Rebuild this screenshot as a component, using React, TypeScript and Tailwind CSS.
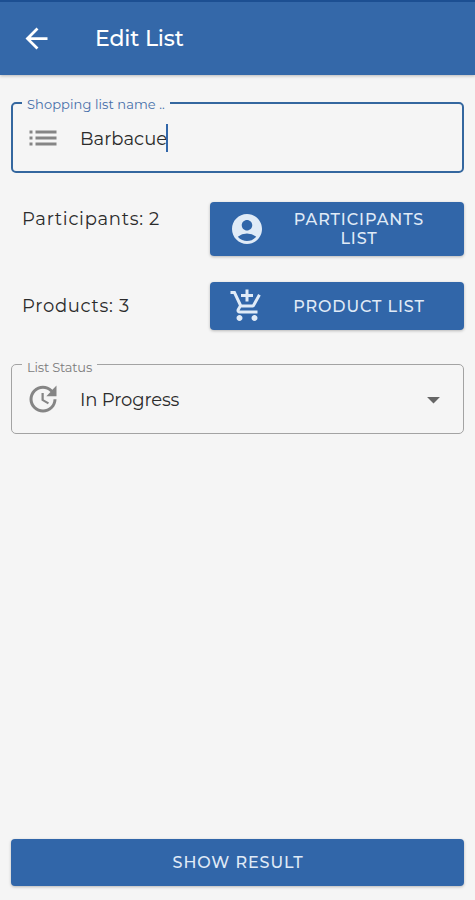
import React, { useState } from 'react';
import {
    MdAccountCircle,
    MdArrowBack,
    MdArrowDropDown,
    MdList,
    MdOutlineAddShoppingCart,
    MdUpdate,
} from 'react-icons/md';

const buttonClass =
    'flex items-center rounded-[4px] bg-[#3166a9] text-[16px] font-medium leading-[19px] text-[#e0ebf7] shadow-[0_1px_3px_rgba(0,0,0,0.25)]';

const App: React.FC = () => {
    const [name] = useState('Barbacue');
    const participants = 2;
    const products = 3;

    return (
        <div className="flex h-[900px] w-[475px] flex-col overflow-hidden bg-[#f5f5f5] font-['Montserrat','Inter',sans-serif] text-[#2b2b2b]">
            <header className="flex h-[75px] shrink-0 items-center border-t-2 border-[#1c4f92] bg-[#3468a9] pl-[20px] text-white shadow-[0_1px_3px_rgba(0,0,0,0.25)]">
                <MdArrowBack className="mb-px size-[33px]" />
                <h1 className="ml-[42px] text-[22px] font-medium leading-none tracking-[-0.15px]">Edit List</h1>
            </header>

            <main className="flex flex-1 flex-col px-[11px] pb-[14px] pt-[27px]">
                <fieldset className="h-[71px] w-[453px] rounded-[5px] border-[2.5px] border-[#34679f] pl-[9px]">
                    <legend className="h-[2px] whitespace-nowrap px-[5px] text-[13px] leading-[5px] tracking-[0.08px] text-[#466fa9]">
                        Shopping list name ..
                    </legend>
                    <div className="flex h-[67px] items-center pl-[3px] pt-px">
                        <MdList className="size-[36px] text-[#858585]" />
                        <span className="ml-[19px] pt-[2px] text-[18px]">{name}</span>
                        <span className="-ml-px h-[28px] w-[2px] bg-[#3166a9]" />
                    </div>
                </fieldset>

                <div className="mt-[29px] flex justify-between">
                    <span className="ml-[11px] mt-[5px] text-[18px] leading-[24px] tracking-[0.7px]">
                        Participants: {participants}
                    </span>
                    <button className={`${buttonClass} h-[54px] w-[254px] pl-[19px] tracking-[0.9px]`}>
                        <MdAccountCircle className="size-[36px] shrink-0" />
                        <span className="ml-[24px] w-[140px] text-center">
                            PARTICIPANTS LIST
                        </span>
                    </button>
                </div>

                <div className="mt-[26px] flex items-center justify-between">
                    <span className="ml-[11px] text-[18px] leading-[24px] tracking-[0.7px]">
                        Products: {products}
                    </span>
                    <button className={`${buttonClass} h-[48px] w-[254px] pl-[19px] tracking-[0.9px]`}>
                        <MdOutlineAddShoppingCart className="size-[36px] shrink-0" />
                        <span className="ml-[24px] w-[140px] whitespace-nowrap text-center">PRODUCT LIST</span>
                    </button>
                </div>

                <fieldset className="mt-[34px] h-[70px] w-[453px] rounded-[5px] border border-[#a3a3a3] pl-[10px]">
                    <legend className="h-px whitespace-nowrap px-[5px] text-[13px] leading-[6px] tracking-[-0.2px] text-[#7c7c7c]">
                        List Status
                    </legend>
                    <div className="flex h-[68px] items-center pl-[3px]">
                        <MdUpdate className="size-[36px] text-[#858585]" />
                        <span className="ml-[19px] pt-[2px] text-[18px] tracking-[-0.15px]">In Progress</span>
                        <MdArrowDropDown className="ml-auto mr-[14px] size-[31px] text-[#666666]" />
                    </div>
                </fieldset>

                <button className={`${buttonClass} mt-auto h-[47px] w-[453px] justify-center pl-px tracking-[0.9px]`}>
                    SHOW RESULT
                </button>
            </main>
        </div>
    );
};

export default App;
